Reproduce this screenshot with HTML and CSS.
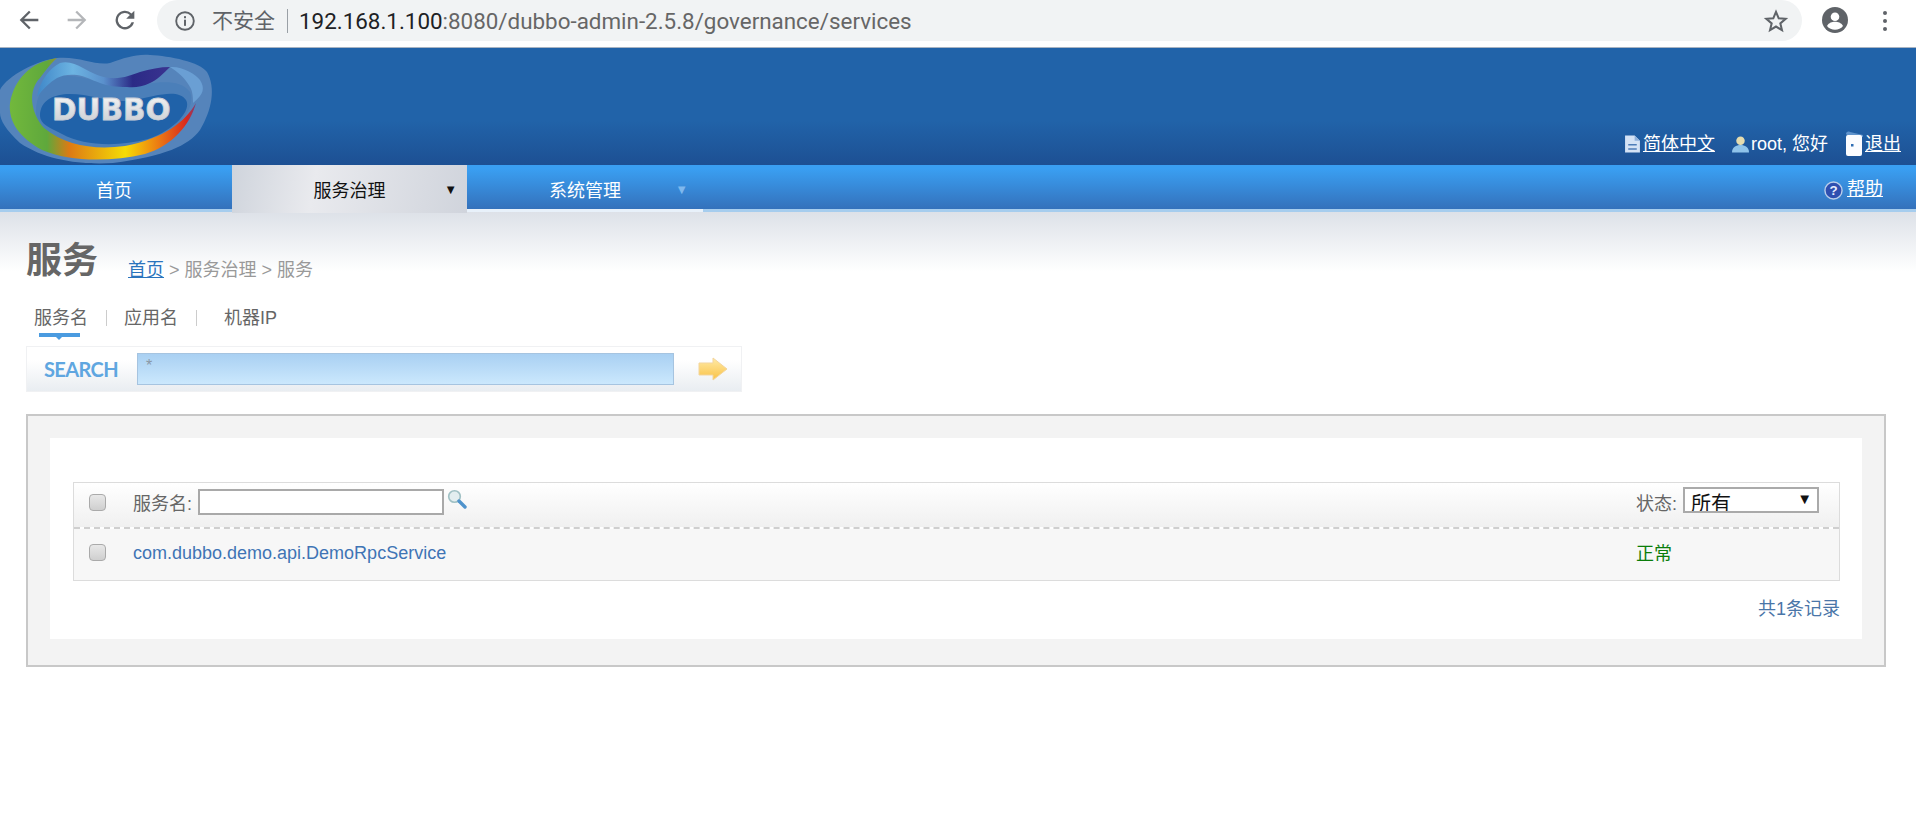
FILE: index.html
```html
<!DOCTYPE HTML>
<html lang="zh-CN">
  <head>
    <meta charset="UTF-8">
    <title>dubbo-admin</title>
    <link rel="stylesheet" href="styles.css">
  </head>
  <body>
    <!-- browser toolbar -->
    <div class="toolbar">
      <div class="tool-btns">
        <svg class="tool-icon" viewBox="0 0 24 24"><path d="M20 11H7.8l5.6-5.6L12 4l-8 8 8 8 1.4-1.4L7.8 13H20z" fill="#5f6368"/></svg>
        <svg class="tool-icon" viewBox="0 0 24 24"><path d="M4 11h12.2l-5.6-5.6L12 4l8 8-8 8-1.4-1.4 5.6-5.6H4z" fill="#b4b6b9"/></svg>
        <svg class="tool-icon" viewBox="0 0 24 24"><path d="M17.6 6.4A8 8 0 1 0 19.7 14h-2.1a6 6 0 1 1-1.4-6.2L13 11h7V4z" fill="#5f6368"/></svg>
      </div>
      <div class="omnibox">
        <svg class="info-icon" viewBox="0 0 20 20"><circle cx="10" cy="10" r="8" fill="none" stroke="#5f6368" stroke-width="1.7"/><rect x="9.1" y="5.6" width="1.8" height="1.9" fill="#5f6368"/><rect x="9.1" y="8.8" width="1.8" height="5.6" fill="#5f6368"/></svg>
        <span class="not-secure">不安全</span>
        <span class="url"><b>192.168.1.100</b>:8080/dubbo-admin-2.5.8/governance/services</span>
        <svg class="star" viewBox="0 0 24 24"><path d="M12 3.6l2.5 5.9 6.4.5-4.9 4.2 1.5 6.2-5.500-3.300-5.500 3.300 1.500-6.200L3.100 10l6.400-.5z" fill="none" stroke="#5f6368" stroke-width="1.9"/></svg>
      </div>
      <svg class="avatar" viewBox="0 0 26 26"><circle cx="13" cy="13" r="13" fill="#5f6368"/><circle cx="13" cy="9.800" r="4.300" fill="#fff"/><path d="M5 19c2-3.400 5-4.200 8-4.200s6 .8 8 4.200c-2 2.500-4.800 3.800-8 3.800s-6-1.300-8-3.800z" fill="#fff"/></svg>
      <div class="menu-dots"><i></i><i></i><i></i></div>
    </div>

    <!-- site header -->
    <div class="header">
      <svg class="logo" viewBox="0 48 220 117">
        <defs>
          <linearGradient id="ring" x1="0" x2="1" y1="0" y2="0">
            <stop offset="0" stop-color="#72b83c"/>
            <stop offset=".2" stop-color="#5fa83c"/>
            <stop offset=".32" stop-color="#dd7a14"/>
            <stop offset=".62" stop-color="#f5dc05"/>
            <stop offset=".8" stop-color="#ec7a12"/>
            <stop offset=".95" stop-color="#d8281e"/>
            <stop offset="1" stop-color="#7a3d78"/>
          </linearGradient>
          <linearGradient id="ribbon" x1="0" x2="1" y1="0" y2="0">
            <stop offset="0" stop-color="#3f87c8"/>
            <stop offset=".27" stop-color="#6db4e2"/>
            <stop offset=".5" stop-color="#5a90cc"/>
            <stop offset=".72" stop-color="#2b2a86"/>
            <stop offset="1" stop-color="#3a3390"/>
          </linearGradient>
          <linearGradient id="word" x1="0" x2="0" y1="0" y2="1">
            <stop offset="0" stop-color="#f6f6f6"/>
            <stop offset="1" stop-color="#c6cad0"/>
          </linearGradient>
        </defs>
        <path d="M0 90C4 80 30 62 57 58 80 56 95 66 110 63 125 58 135 54 150 55 170 56 200 62 207 72 216 88 212 110 200 130 188 146 165 156 113 163 80 165 45 160 20 143 6 130 0 120 0 113z" fill="#5584bb"/>
        <path d="M36 112C36 90 50 78 62 76 85 74 105 88 130 86 150 84 178 76 190 92 196 106 182 128 150 142 120 152 80 150 55 136 42 128 36 122 36 112z" fill="#4b7fb9"/>
        <path d="M40 116C40 100 54 94 70 94 92 94 112 104 135 100 155 96 178 88 186 100 192 110 175 130 148 139 118 147 84 146 62 134 50 128 40 124 40 116z" fill="#2062a9"/>
        <path d="M57 58C30 62 14 80 10 103 8 122 20 138 42 150 70 162 110 162 145 154 172 146 190 125 196 103 185 122 165 138 125 146 95 150 66 146 44 128 30 112 28 90 40 78 46 70 52 62 57 58z" fill="url(#ring)"/>
        <path d="M37 97C40 80 50 68 60 63 68 61 76 64 83 68 92 73 100 77 110 78 122 79 132 75 140 72 150 69 160 67 170 67 163 74 157 80 150 83 142 87 134 88 127 87 116 87 108 86 100 83 92 80 85 76 77 75 70 74 62 75 57 78 50 82 43 89 37 97z" fill="url(#ribbon)"/>
        <path d="M170 67C182 66 196 74 200 80 205 88 204 94 193 103 193 95 192 90 190 87 185 78 178 72 170 67z" fill="#6a9fd4"/>
        <text class="logo-word" x="52" y="120" fill="url(#word)" stroke="#c8ced8" stroke-width=".8">DUBBO</text>
      </svg>
      <div class="user-links">
        <span class="user-link">
          <svg class="link-icon" viewBox="0 0 16 18"><path d="M1 1h9l5 5v11H1z" fill="#d4e2f5"/><path d="M10 1v5h5" fill="#8fb1dc"/><path d="M4 9h8v1.500H4zM4 13h8v1.500H4z" fill="#4d7cb8"/></svg>
          <a href="#">简体中文</a>
        </span>
        <span class="user-link">
          <svg class="link-icon" viewBox="0 0 16 18"><circle cx="8" cy="6" r="4" fill="#e6dcae"/><path d="M0 17c0-5 4-7 8-7s8 2 8 7z" fill="#8fc3ea"/></svg>
          root, 您好
        </span>
        <span class="user-link">
          <svg class="door-icon" viewBox="0 0 18 26"><path d="M1 3c0-2 2-3 4-2l13 3v2H4z" fill="#5f93cc"/><rect x="1" y="4" width="16" height="21" rx="2" fill="#fbfcff"/><rect x="6" y="13" width="2.500" height="2.500" fill="#2f6db3"/></svg>
          <a href="#">退出</a>
        </span>
      </div>
    </div>

    <!-- main menu -->
    <div class="nav">
      <a class="nav-item" href="#">首页</a>
      <a class="nav-item active" href="#">服务治理<span class="nav-arrow">▼</span></a>
      <a class="nav-item drop" href="#">系统管理<span class="nav-arrow">▼</span></a>
      <span class="help">
        <svg class="help-icon" viewBox="0 0 20 20"><circle cx="10" cy="10" r="9" fill="#2f4fb0" stroke="#b9cdea" stroke-width="1.500"/><text class="help-mark" x="10" y="15" text-anchor="middle" fill="#e8ecff">?</text></svg>
        <a href="#">帮助</a>
      </span>
    </div>

    <div class="content">
      <div class="title-row">
        <h1>服务</h1>
        <div class="crumbs"><a href="#">首页</a> &gt; 服务治理 &gt; 服务</div>
      </div>

      <ul class="search-tabs">
        <li class="current">服务名</li>
        <li class="sep"></li>
        <li>应用名</li>
        <li class="sep"></li>
        <li class="last">机器IP</li>
      </ul>

      <div class="search-box">
        <span class="search-label">SEARCH</span>
        <div class="search-input">*</div>
        <svg class="go-arrow" viewBox="0 0 30 24">
          <defs>
            <linearGradient id="go" x1="0" x2="0" y1="0" y2="1">
              <stop offset="0" stop-color="#ffeaa6"/>
              <stop offset="1" stop-color="#f9c246"/>
            </linearGradient>
          </defs>
          <path d="M1 6h14V1l14 11-14 11v-5H1z" fill="url(#go)" stroke="#f3d59c" stroke-width="1"/>
        </svg>
      </div>

      <div class="panel">
        <div class="panel-inner">
          <div class="list">
            <div class="list-head">
              <input class="check" type="checkbox">
              <label class="filter-label">服务名:</label>
              <div class="filter-input"></div>
              <svg class="find-icon" viewBox="0 0 20 20"><circle cx="7.500" cy="7.500" r="5.800" fill="#e3eef0" stroke="#9fc0c4" stroke-width="1.600"/><path d="M12 12l6 6" stroke="#4f93cc" stroke-width="3.400" stroke-linecap="round"/></svg>
              <label class="status-label">状态:</label>
              <div class="status-select"><span>所有</span><span class="select-arrow">▼</span></div>
            </div>
            <div class="list-row">
              <input class="check" type="checkbox">
              <a class="service-link" href="#">com.dubbo.demo.api.DemoRpcService</a>
              <span class="status-ok">正常</span>
            </div>
          </div>
          <div class="total">共1条记录</div>
        </div>
      </div>
    </div>
  </body>
</html>
```

FILE: styles.css
```css
html {
  height: 100%;
}
body {
  margin: 0;
  background-color: #fff;
  font-family: "Liberation Sans", "Noto Sans CJK SC", sans-serif;
  font-size: 18px;
  color: #666;
  overflow: hidden;
}
a { color: inherit; }

/* toolbar */
.toolbar {
  display: flex;
  align-items: flex-start;
  height: 47px;
  background-color: #fff;
  border-bottom: 1px solid #a9b4c2;
}
.tool-btns {
  display: flex;
  gap: 20px;
  width: 157px;
  padding: 6px 0 0 15px;
  box-sizing: border-box;
}
.tool-icon { width: 28px; height: 28px; flex: none; }
.omnibox {
  display: flex;
  align-items: center;
  width: 1645px;
  height: 41px;
  padding: 0 13px 0 17px;
  box-sizing: border-box;
  background-color: #f1f3f4;
  border-radius: 21px;
}
.info-icon { width: 22px; height: 22px; flex: none; }
.not-secure {
  margin-left: 16px;
  padding-right: 12px;
  border-right: 1px solid #9aa0a6;
  font-size: 21px;
  line-height: 24px;
  color: #5f6368;
}
.url {
  margin-left: 11px;
  flex: 1;
  font-size: 22.4px;
  font-family: "Roboto", "Liberation Sans", sans-serif;
  color: #666;
}
.url b { font-weight: normal; color: #202124; }
.star { width: 26px; height: 26px; flex: none; }
.avatar { width: 26px; height: 26px; margin: 7px 0 0 20px; flex: none; }
.menu-dots {
  display: flex;
  flex-direction: column;
  gap: 4px;
  margin: 11px 0 0 35px;
}
.menu-dots i {
  width: 4px;
  height: 4px;
  border-radius: 50%;
  background-color: #5f6368;
}

/* header */
.header {
  display: flex;
  justify-content: space-between;
  align-items: flex-end;
  height: 117px;
  background: linear-gradient(#2163a9 0, #2163a9 62%, #1d5093 100%);
}
.logo { width: 220px; height: 117px; display: block; }
.logo-word {
  font-family: "DejaVu Sans", sans-serif;
  font-weight: bold;
  font-size: 29.5px;
}
.user-links {
  display: flex;
  align-items: center;
  gap: 17px;
  height: 26px;
  margin: 0 15px 8px 0;
  color: #fff;
  line-height: 20px;
}
.user-link { display: flex; align-items: center; gap: 2px; white-space: nowrap; }
.link-icon { width: 17px; height: 20px; flex: none; }
.door-icon { width: 18px; height: 26px; flex: none; }

/* menu */
.nav {
  display: flex;
  height: 44px;
  line-height: 53px;
  color: #fff;
  background: linear-gradient(#3a9ff2 0, #3a9ff2 8%, #3471bb 100%);
  border-bottom: 3px solid #a6cdee;
}
.nav-item {
  position: relative;
  display: block;
  width: 228px;
  padding-right: 4px;
  height: 44px;
  text-align: center;
  text-decoration: none;
  flex: none;
}
.nav-item.active {
  width: 235px;
  padding-right: 0;
  height: 48px;
  color: #111;
  background: linear-gradient(100deg, #cfd4dc 0, #e9eaee 35%, #d0d4dc 100%);
}
.nav-item.drop {
  width: 236px;
  padding-right: 0;
  height: 44px;
  border-bottom: 3px solid #e8f1fa;
}
.nav-arrow {
  position: absolute;
  top: 0;
  right: 10px;
  font-size: 13px;
  line-height: 50px;
  color: #111;
}
.drop .nav-arrow { right: 15px; color: #7fb8ee; }
.help {
  display: flex;
  align-items: center;
  gap: 4px;
  height: 44px;
  padding-top: 4px;
  box-sizing: border-box;
  margin: 0 33px 0 auto;
  line-height: 24px;
}
.help-icon { width: 19px; height: 19px; flex: none; margin-top: 2px; }
.help-mark { font-size: 14px; font-weight: bold; font-family: "Liberation Sans", sans-serif; }

/* page */
.content {
  padding: 0 30px 0 26px;
  background: linear-gradient(#dde1e8 0, #fff 60px) no-repeat;
}
.title-row {
  display: flex;
  align-items: flex-end;
  gap: 30px;
  height: 72px;
}
h1 {
  margin: 0;
  font-size: 36px;
  line-height: 46px;
  color: #666;
}
.crumbs {
  line-height: 24px;
  margin-bottom: 2px;
  color: #999;
}
.crumbs a { color: #2a74bd; }
.search-tabs {
  display: flex;
  align-items: center;
  height: 62px;
  margin: 0;
  padding: 6px 0 0 8px;
  box-sizing: border-box;
  list-style: none;
  line-height: 24px;
}
.search-tabs li { position: relative; height: 24px; }
.search-tabs .sep {
  width: 1px;
  height: 16px;
  margin: 0 17px 0 18px;
  background-color: #ccc;
}
.search-tabs .last { margin-left: 10px; }
.search-tabs .current::after {
  content: "";
  position: absolute;
  left: 5px;
  top: 27px;
  width: 41px;
  height: 4px;
  background-color: #4a9be0;
}
.search-tabs .current::before {
  content: "";
  position: absolute;
  left: 22px;
  top: 31px;
  border: 3px solid transparent;
  border-top-color: #4a9be0;
}
.search-box {
  display: flex;
  align-items: center;
  width: 716px;
  height: 46px;
  box-sizing: border-box;
  padding-left: 17px;
  background: linear-gradient(#fff 30%, #e9edf1 100%);
  border: 1px solid #f0f1f3;
}
.search-label {
  width: 93px;
  font-family: "Lato", "Liberation Sans", sans-serif;
  font-size: 20px;
  font-weight: bold;
  letter-spacing: -.6px;
  color: #5fa6e0;
}
.search-input {
  width: 537px;
  height: 32px;
  padding-left: 8px;
  box-sizing: border-box;
  font-size: 16px;
  line-height: 24px;
  color: #8a98a6;
  background: linear-gradient(#a9d0f2, #cbe8fd);
  border: 1px solid #a6c4e0;
}
.go-arrow { width: 30px; height: 24px; margin-left: 24px; flex: none; }
.panel {
  margin-top: 22px;
  padding: 22px 22px 26px;
  background-color: #f3f3f3;
  border: 2px solid #c8c8c8;
}
.panel-inner {
  height: 201px;
  padding: 44px 22px 0 23px;
  box-sizing: border-box;
  background-color: #fff;
}
.list {
  border: 1px solid #dcdcdc;
  background-color: #f7f7f7;
}
.list-head {
  display: flex;
  align-items: center;
  height: 46px;
  padding-bottom: 6px;
  box-sizing: border-box;
  background: linear-gradient(#fff, #f0f0f0);
  border-bottom: 2px dashed #cfcfcf;
}
.list-row {
  display: flex;
  align-items: center;
  height: 51px;
  padding-bottom: 4px;
  box-sizing: border-box;
}
.check {
  appearance: none;
  width: 17px;
  height: 17px;
  margin: 0 27px 0 15px;
  flex: none;
  border: 1px solid #aaa;
  border-radius: 4px;
  background: linear-gradient(#e8e8e8, #cfcfcf);
}
.filter-label { width: 65px; }
.filter-input {
  width: 246px;
  height: 26px;
  box-sizing: border-box;
  background-color: #fff;
  border: 2px solid #a9a9a9;
}
.find-icon { width: 20px; height: 20px; margin: -6px 0 0 3px; flex: none; }
.status-label { margin-left: auto; }
.status-select {
  display: flex;
  justify-content: space-between;
  width: 136px;
  height: 26px;
  margin: -4px 20px 0 6px;
  padding: 0 5px 0 6px;
  box-sizing: border-box;
  overflow: hidden;
  font-size: 20px;
  line-height: 31px;
  color: #111;
  background-color: #fff;
  border: 2px solid #aaa;
}
.select-arrow { font-size: 15px; line-height: 20px; }
.service-link {
  font-size: 18px;
  margin-top: 2px;
  color: #3f74b5;
  text-decoration: none;
}
.status-ok {
  margin-left: auto;
  margin-right: 167px;
  margin-top: -2px;
  color: #0a7d0a;
}
.total {
  margin-top: 16px;
  text-align: right;
  line-height: 24px;
  color: #4a76a8;
}
```
